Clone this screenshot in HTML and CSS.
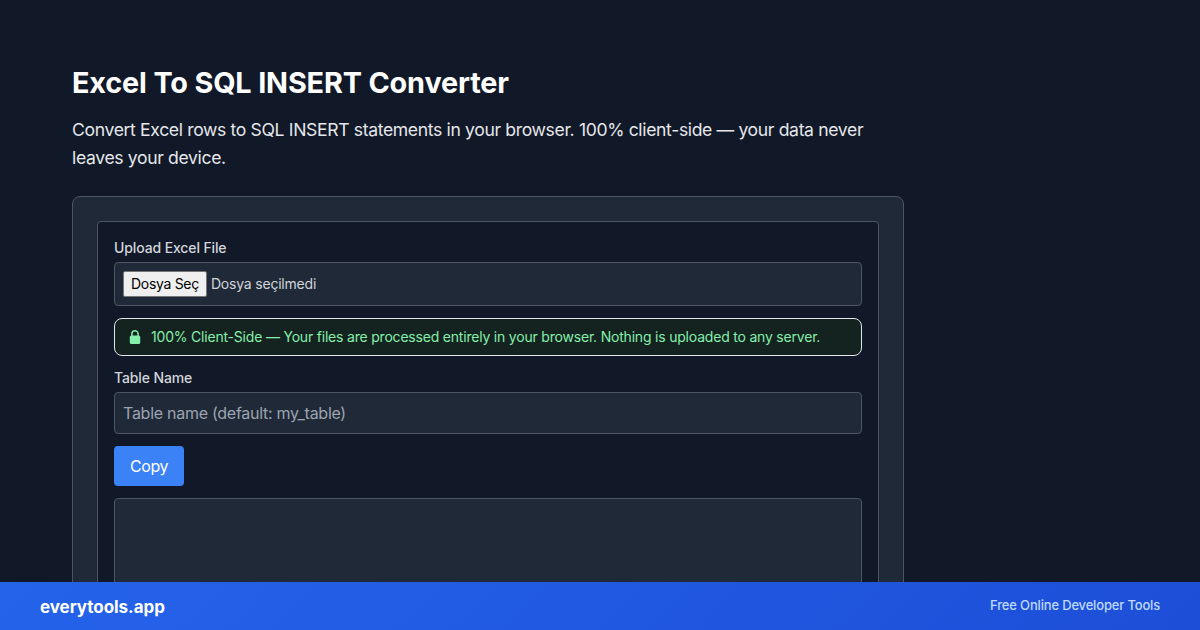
FILE: index.html
```html
<!DOCTYPE html>
<html lang="en">
<head>
    <meta charset="UTF-8">
    <meta name="viewport" content="width=device-width, initial-scale=1.0">
    <title>Excel To SQL INSERT Converter</title>
    <link rel="stylesheet" href="styles.css">
</head>
<body>
    <main class="page">
        <h1>Excel To SQL INSERT Converter</h1>
        <p class="intro">Convert Excel rows to SQL INSERT statements in your browser. 100% client-side — your data never leaves your device.</p>

        <section class="card">
            <div class="panel">
                <label class="field-label">Upload Excel File</label>
                <div class="file-box">
                    <button type="button" class="file-button">Dosya Seç</button>
                    <span class="file-name">Dosya seçilmedi</span>
                </div>

                <div class="notice">
                    <svg class="lock" width="16" height="16" viewBox="0 0 16 16" aria-hidden="true">
                        <path d="M4.9 7V4.9a3.1 3.1 0 0 1 6.2 0V7" fill="none" stroke="#86efac" stroke-width="1.5"/>
                        <rect x="2.8" y="6.6" width="10.4" height="8.4" rx="1.6" fill="#86efac"/>
                    </svg>
                    <span class="notice-text">100% Client-Side — Your files are processed entirely in your browser. Nothing is uploaded to any server.</span>
                </div>

                <label class="field-label" for="table-name">Table Name</label>
                <input class="text-input" type="text" id="table-name" placeholder="Table name (default: my_table)">

                <button type="button" class="copy-button">Copy</button>

                <textarea class="output"></textarea>
            </div>
        </section>
    </main>

    <footer class="banner">
        <span class="brand">everytools.app</span>
        <span class="tagline">Free Online Developer Tools</span>
    </footer>
</body>
</html>
```

FILE: styles.css
```css
* {
    box-sizing: border-box;
}
html, body {
    height: 630px;
    overflow: hidden;
}
body {
    margin: 0;
    background-color: #111827;
    color: #f3f4f6;
    font-family: Inter, "Noto Sans", sans-serif;
}
.page {
    width: 832px;
    margin-left: 72px;
    padding-top: 65px;
}
h1 {
    margin: 0 0 15px;
    font-size: 28.8px;
    line-height: 36px;
    font-weight: 700;
    letter-spacing: -0.15px;
    color: #fff;
}
.intro {
    margin: 0 0 24px;
    font-size: 17.6px;
    line-height: 28px;
    letter-spacing: -0.36px;
    color: #e5e7eb;
}
.card {
    padding: 24px;
    background-color: #1f2937;
    border: 1px solid #4b5563;
    border-radius: 8px;
}
.panel {
    padding: 16px;
    height: 452px;
    background-color: #111827;
    border: 1px solid #4b5563;
    border-radius: 4px;
}
.field-label {
    display: block;
    margin-bottom: 4px;
    font-size: 14px;
    line-height: 20px;
    font-weight: 500;
    letter-spacing: -0.12px;
    color: #d1d5db;
}
.file-box {
    display: flex;
    align-items: center;
    height: 44px;
    padding: 0 8px;
    background-color: #1f2937;
    border: 1px solid #4b5563;
    border-radius: 4px;
}
.file-button {
    height: 26px;
    padding: 0 7px;
    margin-right: 4px;
    font-family: inherit;
    font-size: 14px;
    line-height: 22px;
    letter-spacing: -0.3px;
    color: #000;
    background-color: #efefef;
    border: 1px solid #767676;
    border-radius: 2px;
}
.file-name {
    font-size: 14px;
    line-height: 20px;
    letter-spacing: -0.2px;
    color: #d1d5db;
}
.notice {
    display: flex;
    align-items: center;
    gap: 8px;
    height: 38px;
    margin: 12px 0;
    padding: 0 14px 0 12px;
    font-size: 14px;
    letter-spacing: -0.2px;
    color: #86efac;
    background-color: #14231f;
    border: 1px solid #e5e7eb;
    border-radius: 8px;
}
.notice-text {
    margin-bottom: 2px;
}
.lock {
    flex-shrink: 0;
}
.text-input {
    display: block;
    width: 100%;
    height: 42px;
    padding: 0 8px;
    font-family: inherit;
    font-size: 16px;
    letter-spacing: -0.27px;
    color: #f3f4f6;
    background-color: #1f2937;
    border: 1px solid #4b5563;
    border-radius: 4px;
}
.text-input::placeholder {
    color: #9ca3af;
    opacity: 1;
}
.copy-button {
    display: block;
    height: 40px;
    margin-top: 12px;
    padding: 0 16px;
    font-family: inherit;
    font-size: 16px;
    letter-spacing: -0.4px;
    color: #fff;
    background-color: #3b82f6;
    border: none;
    border-radius: 4px;
}
.output {
    display: block;
    width: 100%;
    height: 200px;
    margin-top: 12px;
    background-color: #1f2937;
    border: 1px solid #4b5563;
    border-radius: 4px;
    resize: none;
}
.banner {
    position: absolute;
    left: 0;
    bottom: 0;
    width: 100%;
    height: 48px;
    display: flex;
    align-items: center;
    justify-content: space-between;
    padding: 0 40px;
    background: linear-gradient(135deg, #2563eb, #1d4ed8);
}
.brand {
    margin-top: 2px;
    font-size: 17px;
    font-weight: 700;
    letter-spacing: -0.05px;
    color: #fff;
}
.tagline {
    margin-bottom: 2px;
    font-size: 13px;
    font-weight: 500;
    letter-spacing: -0.17px;
    color: #bfdbfe;
}
```
